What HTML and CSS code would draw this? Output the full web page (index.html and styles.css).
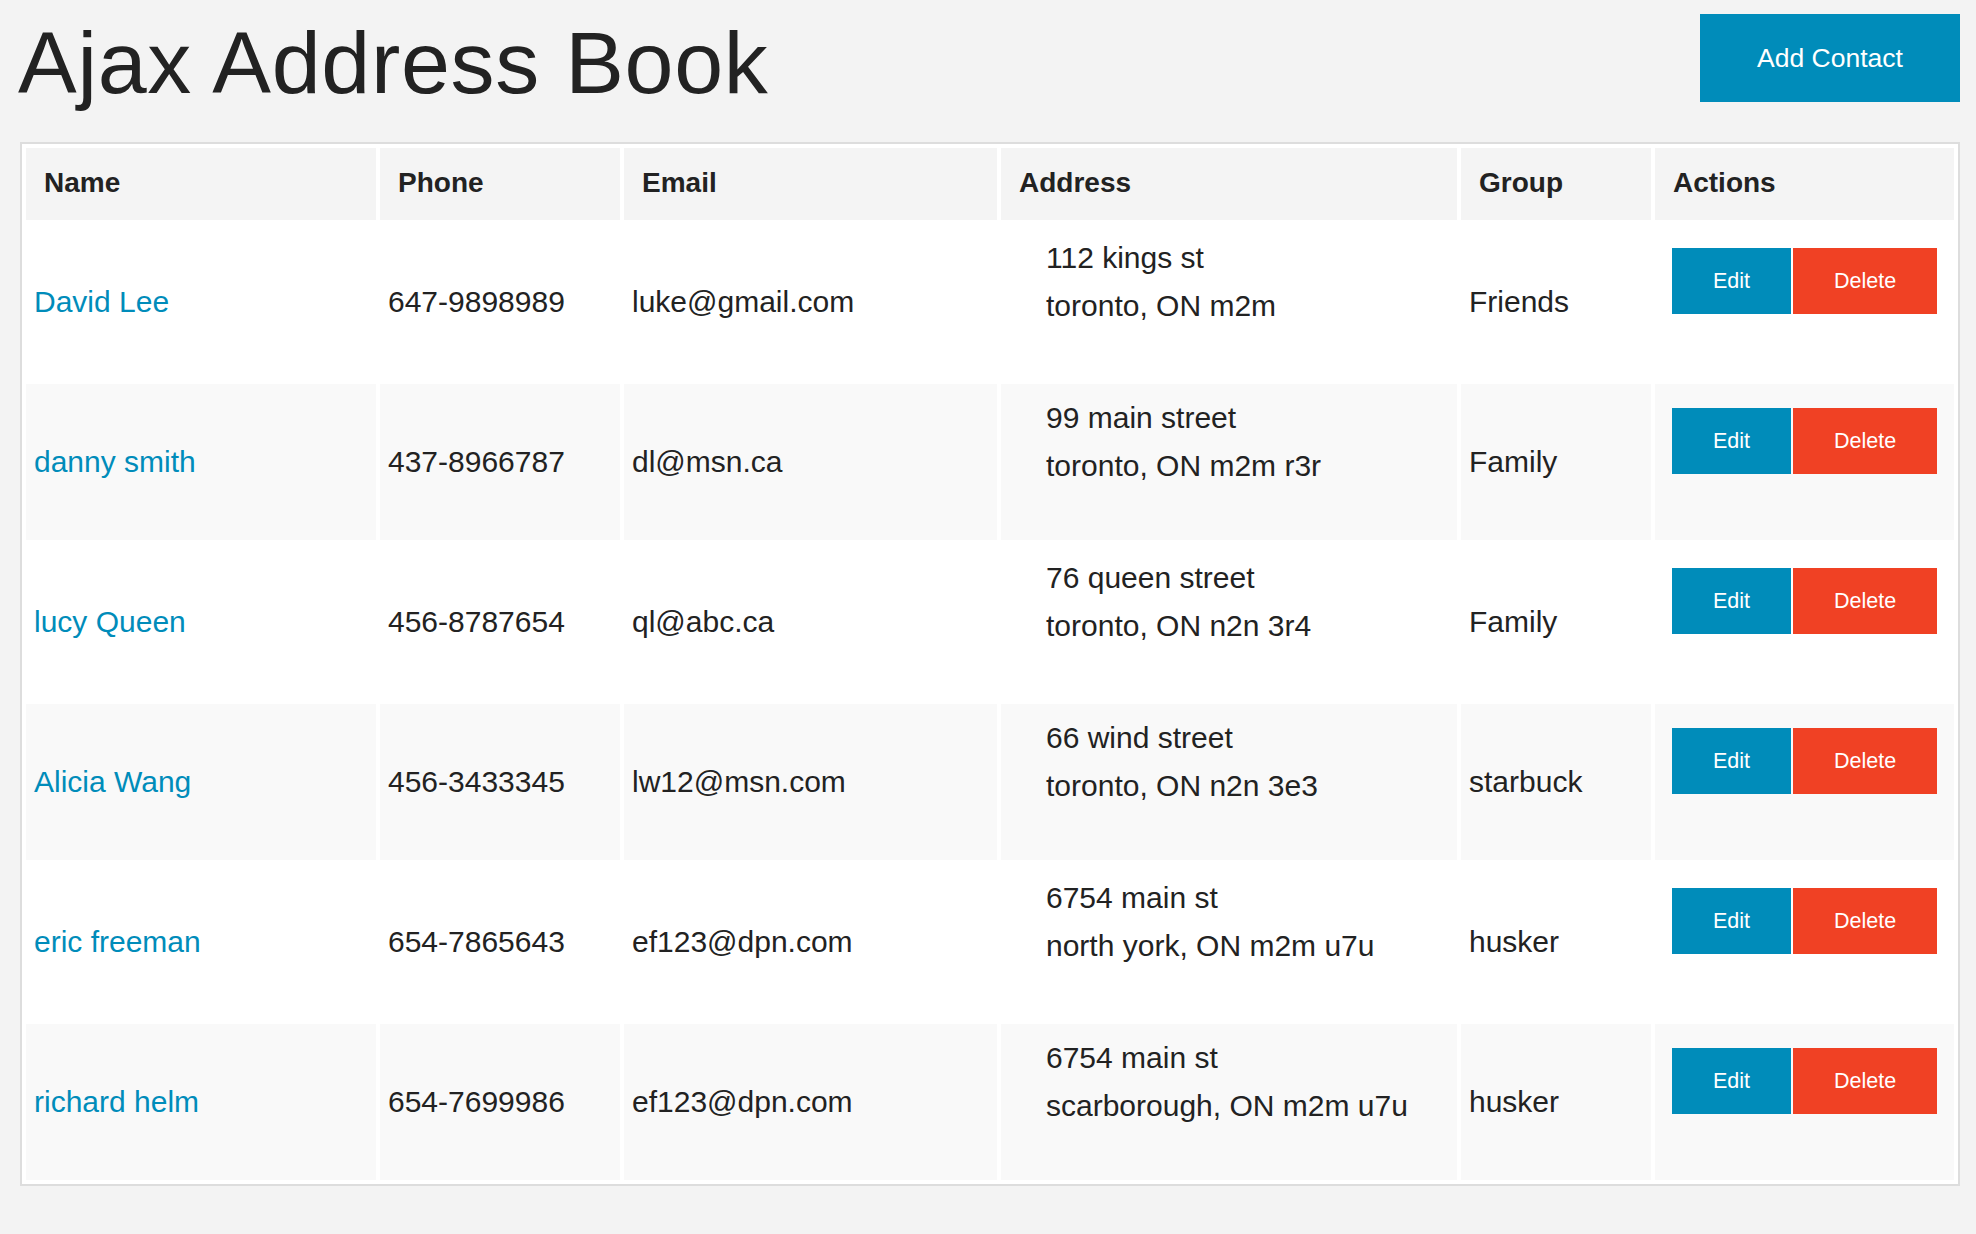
FILE: index.html
```
<!DOCTYPE html>
<html lang="en">
<head>
<meta charset="utf-8">
<title>Ajax Address Book</title>
<link rel="stylesheet" href="styles.css">
</head>
<body>
<div class="page">
  <header class="topbar">
    <h1 class="title">Ajax Address Book</h1>
    <a class="btn-add" href="#">Add Contact</a>
  </header>
  <table class="contacts">
    <thead>
      <tr>
        <th class="c-name">Name</th>
        <th class="c-phone">Phone</th>
        <th class="c-email">Email</th>
        <th class="c-addr">Address</th>
        <th class="c-group">Group</th>
        <th class="c-actions">Actions</th>
      </tr>
    </thead>
    <tbody>
      <tr>
        <td><a class="name" href="#">David Lee</a></td>
        <td>647-9898989</td>
        <td>luke@gmail.com</td>
        <td><ul class="addr"><li>112 kings st</li><li>toronto, ON m2m</li></ul></td>
        <td>Friends</td>
        <td><div class="actions"><a class="btn btn-edit" href="#">Edit</a><a class="btn btn-del" href="#">Delete</a></div></td>
      </tr>
      <tr>
        <td><a class="name" href="#">danny smith</a></td>
        <td>437-8966787</td>
        <td>dl@msn.ca</td>
        <td><ul class="addr"><li>99 main street</li><li>toronto, ON m2m r3r</li></ul></td>
        <td>Family</td>
        <td><div class="actions"><a class="btn btn-edit" href="#">Edit</a><a class="btn btn-del" href="#">Delete</a></div></td>
      </tr>
      <tr>
        <td><a class="name" href="#">lucy Queen</a></td>
        <td>456-8787654</td>
        <td>ql@abc.ca</td>
        <td><ul class="addr"><li>76 queen street</li><li>toronto, ON n2n 3r4</li></ul></td>
        <td>Family</td>
        <td><div class="actions"><a class="btn btn-edit" href="#">Edit</a><a class="btn btn-del" href="#">Delete</a></div></td>
      </tr>
      <tr>
        <td><a class="name" href="#">Alicia Wang</a></td>
        <td>456-3433345</td>
        <td>lw12@msn.com</td>
        <td><ul class="addr"><li>66 wind street</li><li>toronto, ON n2n 3e3</li></ul></td>
        <td>starbuck</td>
        <td><div class="actions"><a class="btn btn-edit" href="#">Edit</a><a class="btn btn-del" href="#">Delete</a></div></td>
      </tr>
      <tr>
        <td><a class="name" href="#">eric freeman</a></td>
        <td>654-7865643</td>
        <td>ef123@dpn.com</td>
        <td><ul class="addr"><li>6754 main st</li><li>north york, ON m2m u7u</li></ul></td>
        <td>husker</td>
        <td><div class="actions"><a class="btn btn-edit" href="#">Edit</a><a class="btn btn-del" href="#">Delete</a></div></td>
      </tr>
      <tr>
        <td><a class="name" href="#">richard helm</a></td>
        <td>654-7699986</td>
        <td>ef123@dpn.com</td>
        <td><ul class="addr"><li>6754 main st</li><li>scarborough, ON m2m u7u</li></ul></td>
        <td>husker</td>
        <td><div class="actions"><a class="btn btn-edit" href="#">Edit</a><a class="btn btn-del" href="#">Delete</a></div></td>
      </tr>
    </tbody>
  </table>
</div>
</body>
</html>
```
FILE: styles.css
```
html, body {
  margin: 0;
  padding: 0;
}

body {
  background: #f3f3f3;
  color: #222222;
  font-family: "Liberation Sans", Arial, Helvetica, sans-serif;
}

.page {
  padding: 0 16px 40px 18px;
}

.topbar {
  display: flex;
  justify-content: space-between;
  align-items: flex-start;
  padding-top: 14px;
  margin-bottom: 35px;
}

.title {
  margin: 5px 0 0 0;
  font-size: 88px;
  line-height: 88px;
  font-weight: normal;
  letter-spacing: 0.7px;
  color: #222222;
}

.btn-add {
  display: block;
  width: 260px;
  height: 88px;
  line-height: 88px;
  text-align: center;
  background: #008cba;
  color: #ffffff;
  font-size: 26.5px;
  text-decoration: none;
}

.contacts {
  margin-left: 2px;
  width: 1940px;
  table-layout: fixed;
  border-collapse: separate;
  border-spacing: 4px;
  border: 2px solid #dddddd;
  background: #ffffff;
}

.contacts th {
  box-sizing: border-box;
  background: #f4f4f4;
  font-size: 28px;
  font-weight: bold;
  line-height: 32px;
  text-align: left;
  padding: 19px 18px 21px 18px;
  color: #222222;
}

.c-name { width: 350px; }
.c-phone { width: 240px; }
.c-email { width: 373px; }
.c-addr { width: 456px; }
.c-group { width: 190px; }

.contacts td {
  font-size: 30px;
  line-height: 48px;
  padding: 10px 8px;
  vertical-align: middle;
  color: #222222;
  white-space: nowrap;
}

.contacts tbody tr:nth-child(even) td {
  background: #f9f9f9;
}

.name {
  color: #008cba;
  text-decoration: none;
}

.addr {
  list-style: none;
  margin: 0 0 40px 0;
  padding: 0 0 0 37px;
}

.actions {
  display: flex;
  justify-content: center;
  gap: 2px;
  margin-bottom: 42px;
}

.btn {
  display: block;
  padding: 21px 41px;
  font-size: 21.5px;
  line-height: 24px;
  color: #ffffff;
  text-decoration: none;
}

.btn-edit {
  background: #008cba;
}

.btn-del {
  background: #f04124;
}
```
